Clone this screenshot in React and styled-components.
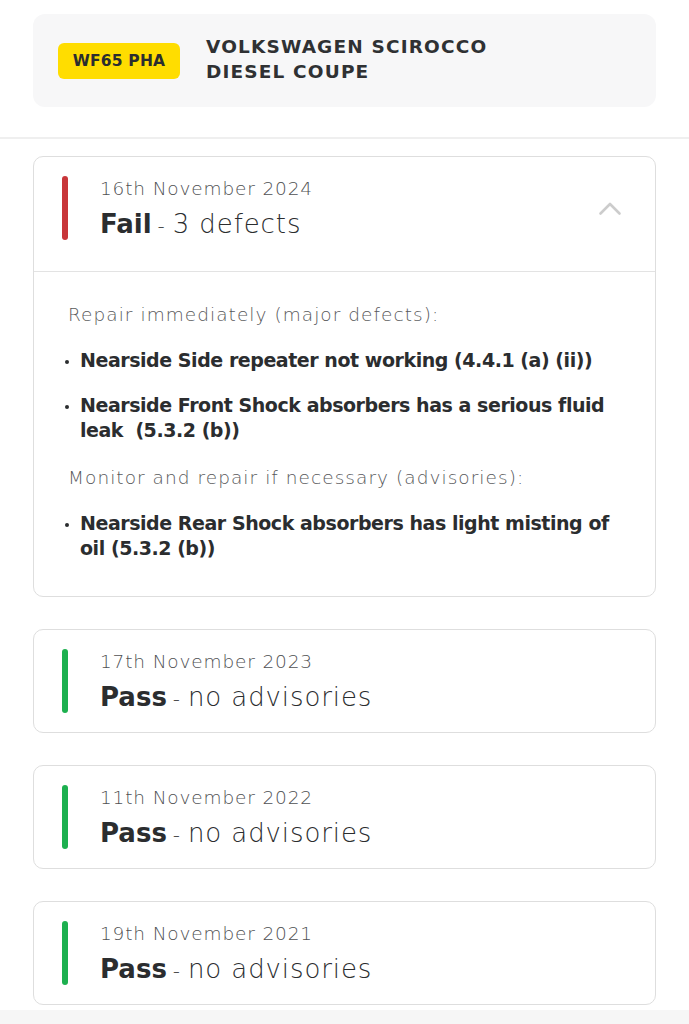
import React from "react";
import styled, { createGlobalStyle } from "styled-components";

const Global = createGlobalStyle`
  html, body { margin: 0; padding: 0; background: #ffffff; }
  body { font-family: "DejaVu Sans", Inter, sans-serif; color: #2b2d2f; }
  * { box-sizing: border-box; }
`;

const Page = styled.div`
  width: 689px;
  display: flex;
  flex-direction: column;
`;

const Top = styled.div`
  padding: 14px 33px 30px 33px;
  border-bottom: 2px solid #efefef;
`;

const VehicleCard = styled.div`
  background: #f7f7f8;
  border-radius: 12px;
  height: 93px;
  padding: 0 25px;
  display: flex;
  align-items: center;
  gap: 26px;
`;

const Plate = styled.div`
  background: #ffdd00;
  border-radius: 6px;
  width: 122px;
  height: 36px;
  display: flex;
  align-items: center;
  justify-content: center;
  font-size: 15.5px;
  font-weight: 700;
  color: #2b2d2f;
  letter-spacing: 0.2px;
`;

const VehicleName = styled.div`
  font-size: 18.5px;
  font-weight: 700;
  line-height: 25px;
  text-transform: uppercase;
  color: #2f3133;
  letter-spacing: 1.15px;
  margin-top: -4px;
`;

const List = styled.div`
  padding: 17px 33px 0 33px;
  display: flex;
  flex-direction: column;
  gap: 32px;
`;

const Card = styled.div`
  border: 1px solid #dedede;
  border-radius: 10px;
  background: #fff;
`;

const CardHeader = styled.div`
  display: flex;
  align-items: flex-start;
  padding: 19px 33px ${(p) => (p.$open ? "31px" : "19px")} 28px;
  border-bottom: ${(p) => (p.$open ? "1.5px solid #e3e3e3" : "none")};
`;

const Bar = styled.div`
  width: 6px;
  height: 64px;
  border-radius: 3px;
  background: ${(p) => (p.$pass ? "#1db04f" : "#c8363a")};
  flex-shrink: 0;
`;

const HeaderText = styled.div`
  margin-left: 32px;
  padding-top: 1px;
  height: 64px;
  flex: 1;
  display: flex;
  flex-direction: column;
`;

const DateText = styled.div`
  font-size: 18.5px;
  font-weight: 300;
  color: #4f5153;
  line-height: 24px;
  letter-spacing: 0.85px;
`;

const Result = styled.div`
  font-size: 26px;
  font-weight: 300;
  line-height: 32px;
  color: #2b2d2f;
  margin-top: 7px;
  letter-spacing: 0.9px;
`;

const ResultWord = styled.span`
  font-weight: 600;
  letter-spacing: 0;
`;

const Dash = styled.span`
  font-size: 20px;
  margin: 0 7px 0 6px;
`;

const Chevron = styled.svg`
  width: 24px;
  height: 15px;
  margin-top: 25px;
  flex-shrink: 0;
`;

const CardBody = styled.div`
  padding: 30px 30px 35px 28px;
  display: flex;
  flex-direction: column;
`;

const Section = styled.div`
  font-size: 18.5px;
  font-weight: 300;
  color: #58595b;
  line-height: 26px;
  padding-left: 6px;
  margin-bottom: 20px;
  letter-spacing: 1.05px;
  &:not(:first-child) { margin-top: 2px; }
`;

const Item = styled.div`
  display: flex;
  font-size: 19px;
  font-weight: 600;
  line-height: 25px;
  color: #2b2d2f;
  margin-bottom: 20px;
  letter-spacing: -0.45px;
  &:last-child { margin-bottom: 0; }
`;

const Bullet = styled.span`
  width: 18px;
  flex-shrink: 0;
  display: flex;
  align-items: center;
  height: 25px;
  padding-left: 3px;
  &::before {
    content: "";
    width: 4px;
    height: 4px;
    border-radius: 50%;
    background: #2b2d2f;
    margin-top: 3px;
  }
`;

const Footer = styled.div`
  height: 20px;
  margin-top: 5px;
  background: #f6f6f6;
`;

const tests = [
  {
    date: "16th November 2024",
    pass: false,
    word: "Fail",
    summary: "3 defects",
    sections: [
      {
        title: "Repair immediately (major defects):",
        items: [
          "Nearside Side repeater not working (4.4.1 (a) (ii))",
          "Nearside Front Shock absorbers has a serious fluid leak\u00a0 (5.3.2 (b))",
        ],
      },
      {
        title: "Monitor and repair if necessary (advisories):",
        items: ["Nearside Rear Shock absorbers has light misting of oil (5.3.2 (b))"],
      },
    ],
  },
  { date: "17th November 2023", pass: true, word: "Pass", summary: "no advisories" },
  { date: "11th November 2022", pass: true, word: "Pass", summary: "no advisories" },
  { date: "19th November 2021", pass: true, word: "Pass", summary: "no advisories" },
];

function TestCard({ t }) {
  const open = !!t.sections;
  return (
    <Card>
      <CardHeader $open={open}>
        <Bar $pass={t.pass} />
        <HeaderText>
          <DateText>{t.date}</DateText>
          <Result>
            <ResultWord>{t.word}</ResultWord>
            <Dash>-</Dash>
            {t.summary}
          </Result>
        </HeaderText>
        {open && (
          <Chevron viewBox="0 0 24 15">
            <path d="M2.5 12.5 L12 3 L21.5 12.5" fill="none" stroke="#cccccc" strokeWidth="2.6" strokeLinecap="round" strokeLinejoin="round" />
          </Chevron>
        )}
      </CardHeader>
      {open && (
        <CardBody>
          {t.sections.map((s) => (
            <React.Fragment key={s.title}>
              <Section>{s.title}</Section>
              {s.items.map((it) => (
                <Item key={it}>
                  <Bullet />
                  <span>{it}</span>
                </Item>
              ))}
            </React.Fragment>
          ))}
        </CardBody>
      )}
    </Card>
  );
}

export default function App() {
  return (
    <Page>
      <Global />
      <Top>
        <VehicleCard>
          <Plate>WF65 PHA</Plate>
          <VehicleName>
            Volkswagen Scirocco
            <br />
            Diesel Coupe
          </VehicleName>
        </VehicleCard>
      </Top>
      <List>
        {tests.map((t) => (
          <TestCard key={t.date} t={t} />
        ))}
      </List>
      <Footer />
    </Page>
  );
}
